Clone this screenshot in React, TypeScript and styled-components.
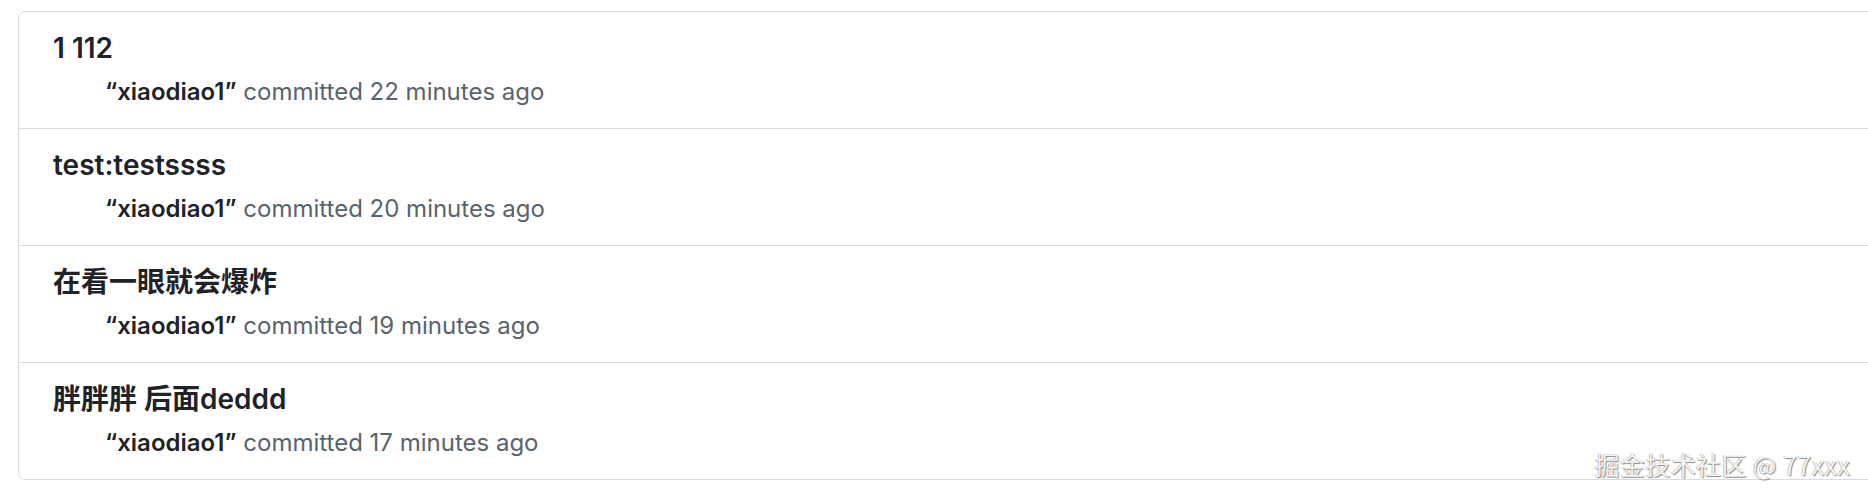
import React from "react";
import styled, { createGlobalStyle } from "styled-components";

const GlobalStyle = createGlobalStyle`
  html, body {
    margin: 0;
    padding: 0;
    background: #ffffff;
    overflow: hidden;
  }
  body {
    font-family: Inter, "Noto Sans", "Noto Sans CJK SC", sans-serif;
    -webkit-font-smoothing: antialiased;
  }
`;

const commits = [
  { title: "1 112", author: "xiaodiao1", time: "22 minutes ago" },
  { title: "test:testssss", author: "xiaodiao1", time: "20 minutes ago" },
  { title: "在看一眼就会爆炸", author: "xiaodiao1", time: "19 minutes ago" },
  { title: "胖胖胖 后面deddd", author: "xiaodiao1", time: "17 minutes ago" },
];

export default function App() {
  return (
    <Page>
      <GlobalStyle />
      <CommitList>
        {commits.map((c, i) => (
          <CommitRow key={i} $first={i === 0}>
            <CommitTitle>{c.title}</CommitTitle>
            <CommitMeta>
              <Author>“{c.author}”</Author> committed {c.time}
            </CommitMeta>
          </CommitRow>
        ))}
      </CommitList>
      <Watermark>掘金技术社区 @ 77xxx</Watermark>
    </Page>
  );
}

const Page = styled.div`
  position: relative;
  width: 1868px;
  height: 496px;
  padding: 11px 0 0 18px;
  box-sizing: border-box;
`;

const CommitList = styled.ul`
  list-style: none;
  margin: 0;
  padding: 0;
  width: 1880px;
  border: 1px solid #d8dadd;
  border-radius: 7px;
  background: #ffffff;
`;

const CommitRow = styled.li<{ $first?: boolean }>`
  display: flex;
  flex-direction: column;
  gap: 5px;
  padding: 15px 34px 18px;
  border-top: ${(p) => (p.$first ? "none" : "1px solid #d8dadd")};
`;

const CommitTitle = styled.div`
  font-family: Inter, "Noto Sans CJK SC", sans-serif;
  font-size: 28px;
  font-weight: 600;
  line-height: 42px;
  color: #1f2328;
`;

const CommitMeta = styled.div`
  padding-left: 52px;
  font-family: Inter, "Noto Sans CJK SC", sans-serif;
  font-size: 24px;
  line-height: 36px;
  color: #59636e;
`;

const Author = styled.span`
  font-weight: 600;
  color: #1f2328;
`;

const Watermark = styled.div`
  position: absolute;
  right: 18px;
  bottom: 19px;
  font-family: "Noto Sans CJK SC", "Liberation Sans", sans-serif;
  font-size: 25px;
  line-height: 25px;
  letter-spacing: 0.4px;
  color: #f4f4f4;
  text-shadow: 1px 1px 1px #8a8a8a, -0.5px -0.5px 0.5px #9a9a9a;
  white-space: nowrap;
`;
